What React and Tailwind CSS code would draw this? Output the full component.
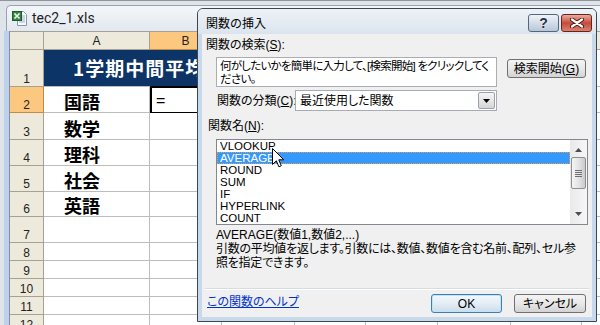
import React from 'react'

const ui = "[font-family:'Liberation_Sans','Noto_Sans_CJK_JP',sans-serif]"
const jp = "[font-family:'Noto_Sans_CJK_JP',sans-serif]"

const cols = [
  { k: 'A', w: 'w-[106px]' },
  { k: 'B', w: 'w-[72px]', on: true },
  { k: 'C', w: 'w-[73px]' },
  { k: 'D', w: 'w-[71px]' },
  { k: 'E', w: 'w-[72px]' },
  { k: 'F', w: 'w-[73px]' },
  { k: 'G', w: 'w-[71px]' },
  { k: 'H', w: 'w-[72px]' },
]

const rows = [
  { n: 2, h: 'h-[26px]', v: '国語', on: true },
  { n: 3, h: 'h-[27px]', v: '数学' },
  { n: 4, h: 'h-[26px]', v: '理科' },
  { n: 5, h: 'h-[26px]', v: '社会' },
  { n: 6, h: 'h-[25px]', v: '英語' },
  { n: 7, h: 'h-[26px]' },
  { n: 8, h: 'h-[18px]' },
  { n: 9, h: 'h-[18px]' },
  { n: 10, h: 'h-[18px]' },
  { n: 11, h: 'h-[18px]' },
  { n: 12, h: 'h-[18px]' },
]

const funcs = ['VLOOKUP', 'AVERAGE', 'ROUND', 'SUM', 'IF', 'HYPERLINK', 'COUNT']

const btn =
  'flex items-center justify-center rounded-[3px] border border-[#707070] bg-gradient-to-b from-[#f4f4f4] via-[#e8e8e8] to-[#d3d3d3] text-[12px] text-black whitespace-nowrap'

function RowHead({ n, on }) {
  return (
    <div
      className={`flex w-[34px] shrink-0 items-end justify-center border-r border-b text-[12px] leading-[14px] text-[#222] ${ui} ${
        on ? 'border-[#c28a42] bg-[#fcc77e]' : 'border-[#a5a295] bg-[#edeadc]'
      }`}
    >
      {n}
    </div>
  )
}

function XlsIcon() {
  return (
    <svg width="16" height="17" viewBox="0 0 16 17">
      <path d="M5.5 1.5h6l3 3v11h-9z" fill="#f7f9fc" stroke="#8796a8" />
      <path d="M7 6h6M7 8h6M7 10h6M7 12h6" stroke="#9fb3cb" />
      <rect x="0.5" y="1.5" width="9" height="9" fill="#2f8a3c" stroke="#1b5e26" />
      <path d="M2.5 3.5l5 5M7.5 3.5l-5 5" stroke="#fff" strokeWidth="1.6" />
    </svg>
  )
}

function Cursor() {
  return (
    <svg width="13" height="20" viewBox="0 0 13 20" className="absolute left-[272px] top-[147px]">
      <path d="M0.5 0.5V16.5L4.3 12.8L6.9 18.8L9.3 17.8L6.8 11.8H11.8Z" fill="#fff" stroke="#000" strokeLinejoin="round" />
    </svg>
  )
}

function Dialog() {
  return (
    <div
      className={`absolute left-[197px] top-[7px] flex h-[314px] w-[400px] flex-col rounded-t-[6px] border border-[#3b4654] bg-[#c9d9ec] ${ui}`}
    >
      <div className="flex h-[25px] shrink-0 items-start rounded-t-[5px] bg-gradient-to-b from-[#eef2f7] to-[#dbe4ee] pr-[4px] pl-[8px]">
        <span className={`mt-[6px] text-[12px] leading-[16px] text-black ${jp}`}>関数の挿入</span>
        <div className="mt-[5px] ml-auto flex gap-[2px]">
          <div className="flex h-[18px] w-[31px] items-center justify-center rounded-[3px] border border-[#56667a] bg-gradient-to-b from-[#eef3f8] via-[#d3dde9] to-[#b7c7d9] text-[14px] leading-none font-bold text-[#243243] [text-shadow:0_0_2px_#fff]">
            ?
          </div>
          <div className="flex h-[18px] w-[31px] items-center justify-center rounded-[3px] border border-[#6b2219] bg-gradient-to-b from-[#e9aca0] via-[#c44b3c] to-[#d9826f]">
            <svg width="14" height="10" viewBox="0 0 14 10">
              <path d="M2 1.5L12 8.5M12 1.5L2 8.5" stroke="#4a1510" strokeWidth="4" strokeLinecap="round" />
              <path d="M2 1.5L12 8.5M12 1.5L2 8.5" stroke="#fff" strokeWidth="2.2" strokeLinecap="round" />
            </svg>
          </div>
        </div>
      </div>

      <div className="mx-[4px] mb-[4px] flex flex-1 flex-col bg-[#f0f0f0] text-[12px] text-black [font-feature-settings:'palt']">
        <div className="mt-[4px] h-[14px] pl-[4px] leading-[14px] whitespace-nowrap">
          関数の検索(<span className="underline">S</span>):
        </div>
        <div className="mt-[5px] flex pl-[14px]">
          <div className="h-[30px] w-[281px] overflow-hidden border border-[#abadb3] bg-white pt-[2px] pl-[3px] text-[11.5px] leading-[13px] tracking-[-0.75px] whitespace-nowrap">
            何がしたいかを簡単に入力して、[検索開始] をクリックしてく
            <br />
            ださい。
          </div>
          <div className={`mt-[2px] ml-[10px] h-[19px] w-[79px] ${btn}`}>
            検索開始(<span className="underline">G</span>)
          </div>
        </div>
        <div className="mt-[3px] flex h-[21px] items-center pl-[15px]">
          <span className="w-[78px] shrink-0 leading-[14px] whitespace-nowrap">
            関数の分類(<span className="underline">C</span>):
          </span>
          <div className="flex h-[21px] w-[202px] items-center border border-[#a5acb5] bg-white pr-px">
            <span className="flex-1 pl-[4px] leading-[14px]">最近使用した関数</span>
            <div className="flex h-[17px] w-[17px] items-center justify-center rounded-[2px] border border-[#9aa1aa] bg-gradient-to-b from-[#f5f5f5] to-[#d6d6d6]">
              <svg width="7" height="4" viewBox="0 0 7 4">
                <path d="M0 0h7L3.5 4z" fill="#000" />
              </svg>
            </div>
          </div>
        </div>
        <div className="mt-[8px] h-[14px] pl-[6px] leading-[14px] whitespace-nowrap">
          関数名(<span className="underline">N</span>):
        </div>
        <div className="mt-[6px] ml-[14px] flex h-[86px] w-[372px] border border-[#828790] bg-white">
          <div className="flex flex-1 flex-col">
            {funcs.map((f) =>
              f === 'AVERAGE' ? (
                <div
                  key={f}
                  className="h-[12px] border border-dotted border-[#e09a52] bg-[#3399ff] pl-[2px] text-[11.5px] leading-[10px] text-white"
                >
                  {f}
                </div>
              ) : (
                <div key={f} className="h-[12px] pl-[3px] text-[11.5px] leading-[12px]">
                  {f}
                </div>
              )
            )}
          </div>
          <div className="flex w-[17px] flex-col items-center bg-gradient-to-r from-[#e9e9e9] to-[#f6f6f6]">
            <svg width="7" height="4" viewBox="0 0 7 4" className="mt-[8px]">
              <path d="M0 4h7L3.5 0z" fill="#4d4d4d" />
            </svg>
            <div className="mt-[5px] flex h-[32px] w-[15px] flex-col items-center justify-center gap-[1px] rounded-[2px] border border-[#8f8f8f] bg-gradient-to-r from-[#f5f5f5] via-[#e4e4e4] to-[#c9c9cb]">
              <div className="h-px w-[7px] bg-[#6f6f6f]" />
              <div className="h-px w-[7px] bg-[#6f6f6f]" />
              <div className="h-px w-[7px] bg-[#6f6f6f]" />
              <div className="h-px w-[7px] bg-[#6f6f6f]" />
            </div>
            <svg width="7" height="4" viewBox="0 0 7 4" className="mt-auto mb-[8px]">
              <path d="M0 0h7L3.5 4z" fill="#4d4d4d" />
            </svg>
          </div>
        </div>
        <div className="mt-[3px] pl-[14px] leading-[14px] whitespace-nowrap">AVERAGE(数値1,数値2,...)</div>
        <div className="pl-[14px] leading-[14px] tracking-[-0.25px] whitespace-nowrap">
          引数の平均値を返します。引数には、数値、数値を含む名前、配列、セル参
          <br />
          照を指定できます。
        </div>
        <div className="mx-[3px] mt-[18px] border-t border-b border-t-[#d5dde4] border-b-white" />
        <div className="mt-[4px] flex h-[19px] items-center pr-[6px] pl-[5px]">
          <span className="mb-[3px] leading-[14px] text-[#0033cc] underline">この関数のヘルプ</span>
          <div className="ml-auto flex gap-[12px]">
            <div className="flex h-[19px] w-[71px] items-center justify-center rounded-[3px] border border-[#3c7fb1] bg-gradient-to-b from-[#f2f8fc] via-[#e3edf5] to-[#cddcea] shadow-[inset_0_0_0_1px_#bfe4f9]">
              OK
            </div>
            <div className={`h-[19px] w-[72px] ${btn}`}>キャンセル</div>
          </div>
        </div>
      </div>
    </div>
  )
}

export default function App() {
  return (
    <div className="relative h-[325px] w-[600px] overflow-hidden border-t border-[#8f9499] bg-[#dfe4ea]">
      <div className="h-[4px]" />
      <div className="ml-[6px] flex h-[26px] items-center gap-[4px] rounded-tl-[5px] border-t border-l border-[#97a3b0] bg-gradient-to-b from-[#f4f7fa] to-[#e2e8ef] pl-[5px]">
        <XlsIcon />
        <span className="text-[14px] text-[#1e1e1e] [font-family:Roboto,sans-serif]">tec2_1.xls</span>
      </div>
      <div className="flex">
        <div className="w-[4px] shrink-0" />
        <div className="w-[6px] shrink-0 border-r border-[#8390a0] bg-[#bdd1ea]" />
        <div className="flex flex-col">
          <div className="flex h-[19px] border-t border-[#a5a295]">
            <div className="w-[34px] shrink-0 border-r border-b border-[#a5a295] bg-[#edeadc]" />
            {cols.map((c) => (
              <div
                key={c.k}
                className={`flex shrink-0 items-center justify-center border-r border-b text-[12px] leading-none text-[#222] ${ui} ${c.w} ${
                  c.on ? 'border-[#c28a42] bg-[#fcc77e]' : 'border-[#a5a295] bg-[#edeadc]'
                }`}
              >
                {c.k}
              </div>
            ))}
          </div>

          <div className="flex h-[37px]">
            <RowHead n={1} />
            <div
              className={`flex w-[178px] shrink-0 items-center border-r border-b border-[#bdbdbd] bg-[#0c3467] pl-[29px] text-[19px] font-bold tracking-[1px] text-white ${jp}`}
            >
              1学期中間平均
            </div>
            {cols.slice(2).map((c) => (
              <div key={c.k} className={`shrink-0 border-r border-b border-[#bdbdbd] bg-white ${c.w}`} />
            ))}
          </div>

          {rows.map((r) => (
            <div key={r.n} className={`flex ${r.h}`}>
              <RowHead n={r.n} on={r.on} />
              {cols.map((c, i) => (
                <div
                  key={c.k}
                  className={`relative flex shrink-0 items-end border-r border-b border-[#bdbdbd] bg-white ${c.w}`}
                >
                  {i === 0 && r.v && (
                    <span className={`pl-[20px] text-[18px] leading-[22px] font-bold text-black ${jp}`}>{r.v}</span>
                  )}
                  {i === 1 && r.on && (
                    <>
                      <span className={`pl-[6px] text-[16px] leading-[22px] text-black ${ui}`}>=</span>
                      <div className="absolute -top-px left-0 h-[28px] w-[73px] border-2 border-black" />
                    </>
                  )}
                </div>
              ))}
            </div>
          ))}
        </div>
      </div>
      <Dialog />
      <Cursor />
    </div>
  )
}
